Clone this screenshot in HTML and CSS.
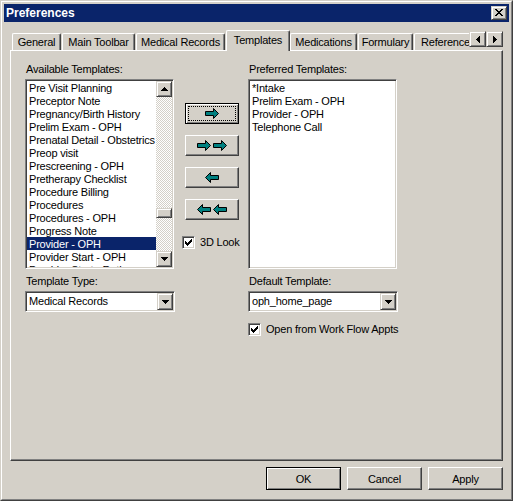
FILE: index.html
```html
<!DOCTYPE html>
<html>
<head>
<meta charset="utf-8">
<title>Preferences</title>
<link rel="stylesheet" href="styles.css">
</head>
<body>
<div class="window">
  <div class="frame">
    <div class="titlebar">
      <span class="title">Preferences</span>
      <div class="close">
        <svg class="px" width="8" height="7" viewBox="0 0 8 7"><path d="M0 0h2v1h-2zM6 0h2v1h-2zM1 1h2v1h-2zM5 1h2v1h-2zM2 2h4v1h-4zM3 3h2v1h-2zM2 4h4v1h-4zM1 5h2v1h-2zM5 5h2v1h-2zM0 6h2v1h-2zM6 6h2v1h-2z" fill="#000"/></svg>
      </div>
    </div>

    <div class="tabstrip">
      <div class="tabs">
        <div class="tab t-general">General</div>
        <div class="tab t-toolbar">Main Toolbar</div>
        <div class="tab t-medrec">Medical Records</div>
        <div class="tab sel t-templates">Templates</div>
        <div class="tab t-meds">Medications</div>
        <div class="tab t-form">Formulary</div>
        <div class="tab t-ref">Reference</div>
      </div>
      <div class="tabscroll">
        <div class="sbtn"><svg class="px" width="4" height="7" viewBox="0 0 4 7"><path d="M3 0h1v7h-1v-1h-1v-1h-1v-1h-1v-1h1v-1h1v-1h1z" fill="#000"/></svg></div>
        <div class="sbtn"><svg class="px" width="4" height="7" viewBox="0 0 4 7"><path d="M0 0h1v1h1v1h1v1h1v1h-1v1h-1v1h-1v1h-1z" fill="#000"/></svg></div>
      </div>
    </div>

    <div class="panel">
      <div class="content">
        <div class="field">
          <div class="label">Available Templates:</div>
          <div class="listbox">
            <div class="items">
              <div class="item">Pre Visit Planning</div>
              <div class="item">Preceptor Note</div>
              <div class="item">Pregnancy/Birth History</div>
              <div class="item">Prelim Exam - OPH</div>
              <div class="item">Prenatal Detail - Obstetrics</div>
              <div class="item">Preop visit</div>
              <div class="item">Prescreening - OPH</div>
              <div class="item">Pretherapy Checklist</div>
              <div class="item">Procedure Billing</div>
              <div class="item">Procedures</div>
              <div class="item">Procedures - OPH</div>
              <div class="item">Progress Note</div>
              <div class="item selected">Provider - OPH</div>
              <div class="item">Provider Start - OPH</div>
              <div class="item">Provider Start - Retina</div>
            </div>
            <div class="vscroll">
              <div class="arrowbtn"><svg class="px" width="7" height="4" viewBox="0 0 7 4"><path d="M3 0h1v1h1v1h1v1h1v1h-7v-1h1v-1h1v-1h1z" fill="#000"/></svg></div>
              <div class="track"><div class="thumb"></div></div>
              <div class="arrowbtn"><svg class="px" width="7" height="4" viewBox="0 0 7 4"><path d="M0 0h7v1h-1v1h-1v1h-1v1h-1v-1h-1v-1h-1v-1h-1z" fill="#000"/></svg></div>
            </div>
          </div>
        </div>

        <div class="movers">
          <div class="mover default">
            <div class="focus">
              <svg width="15" height="11" viewBox="0 0 15 11"><polygon points="0.5,3.5 8.5,3.5 8.5,0.5 13.5,5.5 8.5,10.5 8.5,7.5 0.5,7.5" fill="#008080" stroke="#000"/></svg>
            </div>
          </div>
          <div class="mover">
            <svg width="30" height="11" viewBox="0 0 30 11"><polygon points="0.5,3.5 8.5,3.5 8.5,0.5 13.5,5.5 8.5,10.5 8.5,7.5 0.5,7.5" fill="#008080" stroke="#000"/><polygon transform="translate(16 0)" points="0.5,3.5 8.5,3.5 8.5,0.5 13.5,5.5 8.5,10.5 8.5,7.5 0.5,7.5" fill="#008080" stroke="#000"/></svg>
          </div>
          <div class="mover">
            <svg width="15" height="11" viewBox="0 0 15 11"><polygon points="13.5,3.5 5.5,3.5 5.5,0.5 0.5,5.5 5.5,10.5 5.5,7.5 13.5,7.5" fill="#008080" stroke="#000"/></svg>
          </div>
          <div class="mover">
            <svg width="30" height="11" viewBox="0 0 30 11"><polygon points="13.5,3.5 5.5,3.5 5.5,0.5 0.5,5.5 5.5,10.5 5.5,7.5 13.5,7.5" fill="#008080" stroke="#000"/><polygon transform="translate(16 0)" points="13.5,3.5 5.5,3.5 5.5,0.5 0.5,5.5 5.5,10.5 5.5,7.5 13.5,7.5" fill="#008080" stroke="#000"/></svg>
          </div>
          <div class="checkrow look">
            <div class="check"><svg class="px" width="7" height="7" viewBox="0 0 7 7"><path d="M6 0h1v1h-1zM5 1h2v1h-2zM0 2h1v1h-1zM4 2h3v1h-3zM0 3h2v1h-2zM3 3h3v1h-3zM0 4h5v1h-5zM1 5h3v1h-3zM2 6h1v1h-1z" fill="#000"/></svg></div>
            <span>3D Look</span>
          </div>
        </div>

        <div class="field">
          <div class="label">Preferred Templates:</div>
          <div class="listbox">
            <div class="items">
              <div class="item">*Intake</div>
              <div class="item">Prelim Exam - OPH</div>
              <div class="item">Provider - OPH</div>
              <div class="item">Telephone Call</div>
            </div>
          </div>
        </div>

        <div class="field">
          <div class="label">Template Type:</div>
          <div class="combo">
            <div class="combo-text">Medical Records</div>
            <div class="arrowbtn combo-btn"><svg class="px" width="7" height="4" viewBox="0 0 7 4"><path d="M0 0h7v1h-1v1h-1v1h-1v1h-1v-1h-1v-1h-1v-1h-1z" fill="#000"/></svg></div>
          </div>
        </div>

        <div></div>

        <div class="field">
          <div class="label">Default Template:</div>
          <div class="combo">
            <div class="combo-text">oph_home_page</div>
            <div class="arrowbtn combo-btn"><svg class="px" width="7" height="4" viewBox="0 0 7 4"><path d="M0 0h7v1h-1v1h-1v1h-1v1h-1v-1h-1v-1h-1v-1h-1z" fill="#000"/></svg></div>
          </div>
          <div class="checkrow wf">
            <div class="check"><svg class="px" width="7" height="7" viewBox="0 0 7 7"><path d="M6 0h1v1h-1zM5 1h2v1h-2zM0 2h1v1h-1zM4 2h3v1h-3zM0 3h2v1h-2zM3 3h3v1h-3zM0 4h5v1h-5zM1 5h3v1h-3zM2 6h1v1h-1z" fill="#000"/></svg></div>
            <span>Open from Work Flow Appts</span>
          </div>
        </div>
      </div>
    </div>

    <div class="buttons">
      <div class="btn default">OK</div>
      <div class="btn">Cancel</div>
      <div class="btn">Apply</div>
    </div>
  </div>
</div>
</body>
</html>
```

FILE: styles.css
```css
html, body {
  margin: 0;
  padding: 0;
  background: #d4d0c8;
}

body {
  font-family: "Liberation Sans", Arial, sans-serif;
  font-size: 11px;
  letter-spacing: -0.2px;
  color: #000;
}

.px {
  display: block;
  shape-rendering: crispEdges;
}

.window {
  width: 513px;
  height: 501px;
  box-sizing: border-box;
  border: 1px solid;
  border-color: #d4d0c8 #404040 #404040 #d4d0c8;
  background: #d4d0c8;
}

.frame {
  height: 100%;
  box-sizing: border-box;
  border: 1px solid;
  border-color: #fff #808080 #808080 #fff;
  padding: 2px;
  display: flex;
  flex-direction: column;
}

/* title bar */
.titlebar {
  flex: none;
  height: 18px;
  background: #0a246a;
  display: flex;
  align-items: flex-start;
}

.title {
  font-weight: bold;
  font-size: 12px;
  letter-spacing: 0;
  line-height: 18px;
  color: #fff;
  padding-left: 2px;
}

.close {
  margin: 2px 2px 0 auto;
  width: 16px;
  height: 14px;
  box-sizing: border-box;
  border: 1px solid;
  border-color: #d4d0c8 #404040 #404040 #d4d0c8;
  box-shadow: inset 1px 1px #fff, inset -1px -1px #808080;
  background: #d4d0c8;
  padding: 2px 0 0 3px;
}

/* tabs */
.tabstrip {
  flex: none;
  display: flex;
  height: 20px;
  margin: 8px 6px 0;
}

.tabs {
  flex: none;
  width: 459px;
  height: 21px;
  overflow: hidden;
  display: flex;
  align-items: flex-start;
  position: relative;
  z-index: 1;
}

.tab {
  flex: none;
  box-sizing: border-box;
  height: 17px;
  margin-top: 3px;
  margin-right: 1px;
  border-top: 1px solid #fff;
  border-left: 1px solid #fff;
  border-right: 1px solid #404040;
  border-radius: 2px 2px 0 0;
  box-shadow: inset -1px 0 #808080;
  background: #d4d0c8;
  text-align: center;
  line-height: 16px;
  white-space: nowrap;
}

.tab.sel {
  height: 21px;
  margin-top: 0;
  padding-top: 1px;
}

.t-general { width: 49px; margin-left: 2px; }
.t-toolbar { width: 73px; }
.t-medrec { width: 89px; }
.t-templates { width: 64px; margin-right: 0; }
.t-meds { width: 67px; }
.t-form { width: 55px; }
.t-ref { width: 70px; text-align: left; padding-left: 6px; }

.tabscroll {
  flex: none;
  display: flex;
  margin-top: 1px;
}

.sbtn {
  width: 17px;
  height: 16px;
  box-sizing: border-box;
  border: 1px solid;
  border-color: #d4d0c8 #404040 #404040 #d4d0c8;
  box-shadow: inset 1px 1px #fff, inset -1px -1px #808080;
  background: #d4d0c8;
  display: flex;
  align-items: center;
  justify-content: center;
}

/* panel */
.panel {
  flex: none;
  height: 411px;
  box-sizing: border-box;
  margin: 0 6px;
  border: 1px solid;
  border-color: #fff #404040 #404040 #fff;
  box-shadow: inset -1px -1px #808080;
  padding: 12px 0 0 14px;
}

.content {
  display: grid;
  grid-template-columns: 149px 74px 150px;
  row-gap: 6px;
  align-items: start;
}

.label {
  height: 13px;
  line-height: 13px;
  margin-bottom: 3px;
  padding-left: 1px;
  white-space: nowrap;
}

.listbox {
  width: 149px;
  height: 190px;
  box-sizing: border-box;
  border: 1px solid;
  border-color: #808080 #fff #fff #808080;
  box-shadow: inset 1px 1px #404040, inset -1px -1px #d4d0c8;
  background: #fff;
  padding: 1px;
  display: flex;
}

.items {
  flex: 1;
  min-width: 0;
  overflow: hidden;
}

.item {
  height: 13px;
  line-height: 15px;
  padding-left: 2px;
  white-space: nowrap;
  overflow: hidden;
}

.item.selected {
  background: #0a246a;
  color: #fff;
}

.vscroll {
  flex: none;
  width: 16px;
  display: flex;
  flex-direction: column;
}

.arrowbtn {
  flex: none;
  width: 16px;
  height: 16px;
  box-sizing: border-box;
  border: 1px solid;
  border-color: #d4d0c8 #404040 #404040 #d4d0c8;
  box-shadow: inset 1px 1px #fff, inset -1px -1px #808080;
  background: #d4d0c8;
  display: flex;
  align-items: center;
  justify-content: center;
}

.track {
  flex: 1;
  background-color: #fff;
  background-image: repeating-conic-gradient(#d4d0c8 0% 25%, #fff 0% 50%);
  background-size: 2px 2px;
}

.thumb {
  margin-top: 111px;
  height: 10px;
  box-sizing: border-box;
  border: 1px solid;
  border-color: #d4d0c8 #404040 #404040 #d4d0c8;
  box-shadow: inset 1px 1px #fff, inset -1px -1px #808080;
  background: #d4d0c8;
}

/* move buttons */
.movers {
  padding: 40px 0 0 8px;
  display: flex;
  flex-direction: column;
  align-items: flex-start;
}

.mover {
  width: 54px;
  height: 21px;
  margin: 0 0 11px 3px;
  box-sizing: border-box;
  border: 1px solid;
  border-color: #fff #404040 #404040 #fff;
  box-shadow: inset -1px -1px #808080;
  background: #d4d0c8;
  display: flex;
  align-items: center;
  justify-content: center;
}

.mover svg {
  display: block;
}

.mover.default {
  border-color: #000;
  box-shadow: inset 1px 1px #fff, inset -1px -1px #808080;
  padding: 2px;
  align-items: stretch;
}

.focus {
  flex: 1;
  box-sizing: border-box;
  border: 1px dotted #000;
  display: flex;
  align-items: center;
  justify-content: center;
}

.checkrow {
  display: flex;
  align-items: center;
  gap: 5px;
  height: 13px;
  line-height: 13px;
  white-space: nowrap;
}

.checkrow.look {
  margin-top: 5px;
}

.checkrow.wf {
  margin-top: 11px;
}

.check {
  flex: none;
  width: 13px;
  height: 13px;
  box-sizing: border-box;
  border: 1px solid;
  border-color: #808080 #fff #fff #808080;
  box-shadow: inset 1px 1px #404040, inset -1px -1px #d4d0c8;
  background: #fff;
  padding: 2px;
}

/* combo boxes */
.combo {
  width: 150px;
  height: 21px;
  box-sizing: border-box;
  border: 1px solid;
  border-color: #808080 #fff #fff #808080;
  box-shadow: inset 1px 1px #404040, inset -1px -1px #d4d0c8;
  background: #fff;
  padding: 1px;
  display: flex;
}

.combo-text {
  flex: 1;
  line-height: 17px;
  padding-left: 2px;
  white-space: nowrap;
  overflow: hidden;
}

.combo-btn {
  height: 17px;
}

/* dialog buttons */
.buttons {
  flex: none;
  display: flex;
  justify-content: flex-end;
  gap: 6px;
  margin: 6px 6px 0 0;
}

.btn {
  width: 75px;
  height: 23px;
  box-sizing: border-box;
  border: 1px solid;
  border-color: #fff #404040 #404040 #fff;
  box-shadow: inset -1px -1px #808080;
  background: #d4d0c8;
  display: flex;
  align-items: center;
  justify-content: center;
}

.btn.default {
  border-color: #000;
  box-shadow: inset 1px 1px #fff, inset -1px -1px #808080;
}
```
